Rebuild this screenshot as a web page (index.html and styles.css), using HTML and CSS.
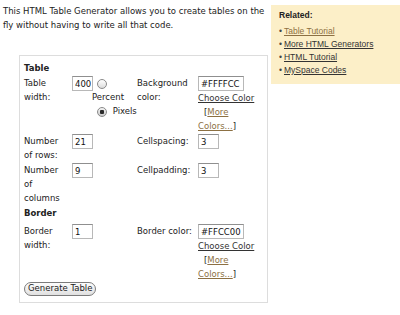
FILE: index.html
```html
<!DOCTYPE html>
<html lang="en">
  <head>
    <meta charset="UTF-8" />
    <meta name="viewport" content="width=device-width, initial-scale=1.0" />
    <title>HTML Table Generator</title>
    <link rel="stylesheet" href="styles.css">
  </head>
  <body>
    <div class="related">
      <h4>Related:</h4>
      <ul>
        <li><a class="seen" href="#">Table Tutorial</a></li>
        <li><a href="#">More HTML Generators</a></li>
        <li><a href="#">HTML Tutorial</a></li>
        <li><a href="#">MySpace Codes</a></li>
      </ul>
    </div>

    <p class="intro">This HTML Table Generator allows you to create tables on the fly without having to write all that code.</p>

    <form class="gen" id="table-gen" action="#">
      <table>
        <colgroup>
          <col class="c1"><col class="c2"><col class="c3"><col class="c4"><col class="c5">
        </colgroup>
        <tr>
          <td class="head" colspan="5">Table</td>
        </tr>
        <tr>
          <td class="lbl">Table width:</td>
          <td><input class="txt w3" type="text" value="400"></td>
          <td><input class="rad" type="radio" name="unit" id="pct"> <label for="pct">Percent</label><br><span class="nw"><input class="rad" type="radio" name="unit" id="px" checked> <label for="px">Pixels</label></span></td>
          <td class="lbl">Background color:</td>
          <td><input class="txt w7" type="text" value="#FFFFCC"><br><a href="#">Choose Color</a><br><span class="more">[<a class="seen" href="#">More</a></span><br><a class="seen" href="#">Colors...</a>]</td>
        </tr>
        <tr>
          <td class="lbl">Number of rows:</td>
          <td><input class="txt w3" type="text" value="21"></td>
          <td></td>
          <td class="lbl">Cellspacing:</td>
          <td><input class="txt w3" type="text" value="3"></td>
        </tr>
        <tr>
          <td class="lbl">Number of columns</td>
          <td><input class="txt w3" type="text" value="9"></td>
          <td></td>
          <td class="lbl">Cellpadding:</td>
          <td><input class="txt w3" type="text" value="3"></td>
        </tr>
        <tr>
          <td class="head" colspan="5">Border</td>
        </tr>
        <tr class="border-row">
          <td class="lbl">Border width:</td>
          <td><input class="txt w3" type="text" value="1"></td>
          <td></td>
          <td class="lbl">Border color:</td>
          <td><input class="txt w7" type="text" value="#FFCC00"><br><a href="#">Choose Color</a><br><span class="more">[<a class="seen" href="#">More</a></span><br><a class="seen" href="#">Colors...</a>]</td>
        </tr>
        <tr>
          <td class="submit" colspan="5"><button class="btn" type="submit">Generate Table</button></td>
        </tr>
      </table>
    </form>
  </body>
</html>
```

FILE: styles.css
```css
* {
  box-sizing: border-box;
}
body {
  margin: 0;
  padding: 4px 0 0 3px;
  font-family: "DejaVu Sans", Verdana, sans-serif;
  font-size: 8.5px;
  line-height: 14px;
  color: #222;
  background: #fff;
}
a {
  color: #333;
}
a.seen {
  color: #8c7043;
}

/* related links box */
.related {
  float: right;
  width: 129px;
  margin: 1px 0 0 2px;
  padding: 4px 8px 7px;
  background: #fcefc8;
  font-family: "Liberation Sans", Arial, sans-serif;
  font-size: 8.5px;
  line-height: 13px;
}
.related h4 {
  margin: 0 0 3px;
  font-size: 8.5px;
}
.related ul {
  list-style: none;
  margin: 0;
  padding: 0;
}
.related li::before {
  content: "\2022";
  margin-right: 2px;
  color: #444;
}

.intro {
  margin: 0;
}

/* generator form */
.gen {
  width: 249px;
  margin: 23px 0 0 16px;
  padding: 4px 4px 6px;
  border: 1px solid #ddd;
}
.gen table {
  table-layout: fixed;
  width: 234px;
  border-collapse: separate;
  border-spacing: 0;
}
.c1 { width: 48px; }
.c2 { width: 20px; }
.c3 { width: 45px; }
.c4 { width: 61px; }
.c5 { width: 60px; }
.gen td {
  padding: 1px 0 0;
  vertical-align: top;
}
.gen td.lbl:first-child {
  padding-right: 6px;
}
.gen td.head {
  font-weight: bold;
}
.gen .border-row td {
  padding-top: 4px;
}
.gen td.submit {
  padding-top: 0;
}
.more {
  padding-left: 6px;
}
.nw {
  white-space: nowrap;
}
.txt {
  height: 15px;
  margin: 0;
  padding: 0 1px 0 2px;
  border: 1px solid #b8b8b8;
  border-top-color: #8f8f8f;
  font-family: inherit;
  font-size: 8.5px;
  color: #111;
  vertical-align: top;
}
.w3 {
  width: 21px;
}
.w7 {
  width: 46px;
}
.rad {
  appearance: none;
  width: 10px;
  height: 10px;
  margin: 3px 3px 0 5px;
  border: 1px solid #8a8a8a;
  border-radius: 50%;
  background: linear-gradient(#fff, #dcdcdc);
  vertical-align: top;
}
.rad:checked {
  background: radial-gradient(circle, #2a2a2a 0 2px, transparent 2.5px), linear-gradient(#f4f4f4, #c8c8c8);
}
.btn {
  appearance: none;
  height: 14px;
  margin: 0;
  padding: 0 3px;
  border: 1px solid #7b7b7b;
  border-radius: 7px;
  background: linear-gradient(#fdfdfd, #e0e0e0);
  font-family: inherit;
  font-size: 8.5px;
  line-height: 11px;
  color: #222;
}
```
